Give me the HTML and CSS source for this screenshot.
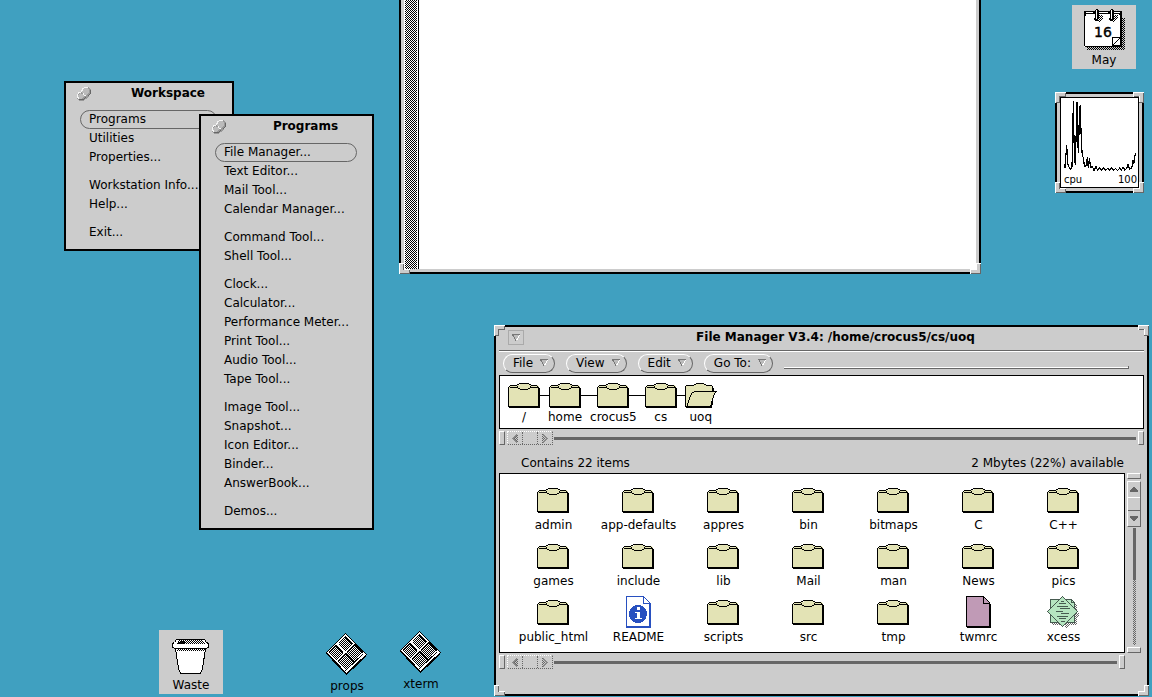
FILE: index.html
```html
<!DOCTYPE html>
<html lang="en">
<head>
<meta charset="utf-8">
<title>OpenWindows desktop</title>
<link rel="stylesheet" href="styles.css">
</head>
<body>
<svg class="defs" aria-hidden="true">
  <defs>
    <pattern id="dither" width="2" height="2" patternUnits="userSpaceOnUse"><path fill="#000" d="M0 0h1v1H0zM1 1h1v1H1z"/></pattern>
    <pattern id="dither-grey" width="2" height="2" patternUnits="userSpaceOnUse"><path fill="#666" d="M0 0h1v1H0zM1 1h1v1H1z"/></pattern>
  </defs>
  <symbol id="folder" viewBox="0 0 32 25">
    <path fill="#e3e3b5" d="M1 4l2-2h8l2-2h7l2 2h7l2 2v20H1z"/>
    <path fill="#000" d="M0 4h1v20H0zM1 23h30v2H1zM30 5h2v20h-2zM29 4h2v1h-2zM1 3h1v1H1zM2 2h7v1H2zM9 1h2v1H9zM11 0h10v1H11zM21 1h2v1h-2zM23 2h6v1h-6zM29 3h1v1h-1zM2 4h7v1H2zM9 3h1v1H9zM10 5h2v1h-2zM12 6h8v1h-8zM20 5h2v1h-2zM22 3h1v1h-1zM23 4h7v1h-7zM9 4h1v1H9zM22 4h1v1h-1z"/>
  </symbol>
  <symbol id="folder-open" viewBox="0 0 32 25">
    <path fill="#e3e3b5" d="M0 4l3-2h6l2-2h7l2 2h6l2 3v3h3l-5 10v5H1z"/>
    <path fill="#000" d="M0 3h1v21H0zM1 2h8v1H1zM9 1h2v1H9zM11 0h8v1h-8zM19 1h2v1h-2zM21 2h6v1h-6zM27 3h1v5h-1zM28 5h1v3h-1zM1 23h26v2H1zM9 8h23v1H9zM7 9h2v1H7zM6 10h1v2H6zM5 12h1v2H5zM4 14h1v3H4zM3 17h1v3H3zM2 20h1v4H2zM30 9h1v1h-1zM29 10h1v2h-1zM28 12h1v3h-1zM27 15h1v3h-1zM26 18h2v4h-2zM25 22h2v2h-2z"/>
  </symbol>
  <symbol id="pin" viewBox="0 0 14 14">
    <path fill="#999" d="M5 2l3-2h4l2 3v3l-2 3-3 3-3 2H2l-2-3V8l2-3h2z"/>
    <path fill="#bbb" d="M6 2l2-1h3l1 2v2l-2 3H7L5 6zM1 8l2-2 2 1 2 2-1 2-3 1-2-1z"/>
    <path fill="none" stroke="#f4f4f4" d="M11 .5H8L5.500 2 4.500 5 2 5.500.5 8v2l1.500 2M6 6l1 2 2 .5"/>
    <path fill="none" stroke="#666" d="M2 12.500h4l3-2M13.500 3v3l-2 3"/>
  </symbol>
  <symbol id="tri" viewBox="0 0 8 7"><path fill="#bbb" d="M0 0h8L4 7z"/><path fill="none" stroke="#777" d="M8 .5H.5L4 6.500"/><path fill="none" stroke="#fff" d="M4.500 6.500L7.500 1"/></symbol>
  <symbol id="corner-tl" viewBox="0 0 11 11"><path fill="#ccc" d="M0 0h11v5H5v6H0z"/><path fill="#666" d="M10 1h1v4H5v6H1v-1h3V4h6z"/><path fill="#fff" d="M0 0h11v1H1v10H0z"/></symbol>
  <symbol id="corner-tr" viewBox="0 0 11 11"><path fill="#ccc" d="M0 0h11v11H6V5H0z"/><path fill="#666" d="M10 1h1v10H6v-1h4zM1 4h5v1H1z"/><path fill="#fff" d="M0 0h11v1H1v4H0zM6 4h1v6H6z"/></symbol>
  <symbol id="corner-bl" viewBox="0 0 11 11"><path fill="#ccc" d="M0 0h5v6h6v5H0z"/><path fill="#666" d="M4 1h1v6H4zM10 7h1v4H1v-1h9z"/><path fill="#fff" d="M0 0h5v1H1v10H0zM5 6h6v1H5z"/></symbol>
  <symbol id="corner-br" viewBox="0 0 11 11"><path fill="#ccc" d="M6 0h5v11H0V6h6z"/><path fill="#666" d="M10 1h1v10H1v-1h9z"/><path fill="#fff" d="M6 0h5v1H7v6H1v4H0V6h6z"/></symbol>
  <symbol id="grid-icon" viewBox="0 0 42 42">
    <path fill="#fff" stroke="#000" d="M19.500.5L.5 19.500l20 21 20-19-2-2z"/>
    <path stroke="#000" fill="none" d="M.5 20.500l20 21 20-19M19.500 37.500l18-17"/>
    <path fill="url(#dither)" d="M19.500 4l7 7-7 7-7-7zM10 13l7 7-7 7-7-7zM28.500 12l8 8-8 8-8-8zM19.500 21l8 8-8 8-8-8z"/>
    <path stroke="#000" fill="none" d="M12.500 10.500l7-7 8 8M3 19.500l7-7 7 7M21 19.500l8-8 8 8M12 28.500l8-8 8 8M19.500 4.500l7 7M10 13.500l7 7M28.500 12.500l8 8"/>
  </symbol>
  <symbol id="arrow-left" viewBox="0 0 6 9"><path fill="url(#dither-grey)" d="M6 0v9L0 5V4z"/><path fill="none" stroke="#888" d="M5 .5l-4 4 4 4"/></symbol>
  <symbol id="arrow-right" viewBox="0 0 6 9"><path fill="url(#dither-grey)" d="M0 0v9l6-4V4z"/><path fill="none" stroke="#888" d="M1 .5l4 4-4 4"/></symbol>
</svg>

<main class="desktop">
  <section class="frame terminal" aria-label="Terminal">
    <div class="terminal-scroll"></div>
    <div class="terminal-text"></div>
    <svg class="corner bl"><use href="#corner-bl"/></svg>
    <svg class="corner br"><use href="#corner-br"/></svg>
  </section>

  <nav class="menu workspace" aria-label="Workspace">
    <header class="menu-head"><svg class="pin"><use href="#pin"/></svg><h2>Workspace</h2></header>
    <div class="group"><button class="item current">Programs</button><button class="item">Utilities</button><button class="item">Properties...</button></div>
    <div class="group"><button class="item">Workstation Info...</button><button class="item">Help...</button></div>
    <div class="group"><button class="item">Exit...</button></div>
  </nav>

  <nav class="menu programs" aria-label="Programs">
    <header class="menu-head"><svg class="pin"><use href="#pin"/></svg><h2>Programs</h2></header>
    <div class="group"><button class="item current">File Manager...</button><button class="item">Text Editor...</button><button class="item">Mail Tool...</button><button class="item">Calendar Manager...</button></div>
    <div class="group"><button class="item">Command Tool...</button><button class="item">Shell Tool...</button></div>
    <div class="group"><button class="item">Clock...</button><button class="item">Calculator...</button><button class="item">Performance Meter...</button><button class="item">Print Tool...</button><button class="item">Audio Tool...</button><button class="item">Tape Tool...</button></div>
    <div class="group"><button class="item">Image Tool...</button><button class="item">Snapshot...</button><button class="item">Icon Editor...</button><button class="item">Binder...</button><button class="item">AnswerBook...</button></div>
    <div class="group"><button class="item">Demos...</button></div>
  </nav>

  <button class="tile calendar">
    <svg width="42" height="42" viewBox="0 0 42 42">
      <path fill="url(#dither)" d="M4 9h38v32H4z"/>
      <path fill="#fff" d="M1 2h38v36H1z"/>
      <path d="M1 2h38v36H2v-1h35V6h-1V5H3v2H2v30H1zM3 3v1h34V3z"/>
      <path fill="#fff" stroke="#000" d="M29.500 36.500v-8h8zM29.500 36.500l8-8v8z"/>
      <path fill="url(#dither)" d="M15 6h5v3l-3 4h-2zM30 6h5v3l-3 4h-2z"/>
      <path d="M10 3h2V1h1V0h2v1h1v9h-1v2h-3v-1h-1V9h2v1h1V3h-2v2h-2zM25 3h2V1h1V0h2v1h1v9h-1v2h-3v-1h-1V9h2v1h1V3h-2v2h-2z"/>
      <path fill="none" stroke="#fff" d="M13.500 1v9M28.500 1v9"/>
      <path d="M12 2h1v7h-1zM27 2h1v7h-1z"/>
      <text class="day" x="20" y="28" text-anchor="middle">16</text>
    </svg>
    <span>May</span>
  </button>

  <section class="frame meter" aria-label="CPU load">
    <div class="meter-face">
      <svg class="graph" width="77" height="74" viewBox="48 294 231 222"><path fill="none" stroke="#000" stroke-width="3.500" d="M58 492L60 504 65 435 69 495 76 508 81 500 85 303 88 470 91 494 96 306 99 440 101 460 103 328 106 316 109 430 112 466 116 475 118 500 124 497 127 470 130 505 133 475 137 503 142 500 147 511 153 500 158 511 164 502 170 511 176 504 182 510 188 505 194 511 200 504 206 510 212 506 218 512 224 504 229 511 234 501 239 510 245 506 249 494 254 508 260 504 264 482 267 490 269 472 272 460"/></svg>
      <div class="meter-labels"><span>cpu</span><span>100</span></div>
    </div>
    <svg class="corner tl"><use href="#corner-tl"/></svg><svg class="corner tr"><use href="#corner-tr"/></svg>
    <svg class="corner bl"><use href="#corner-bl"/></svg><svg class="corner br"><use href="#corner-br"/></svg>
  </section>

  <section class="frame manager" aria-label="File Manager">
    <header class="titlebar">
      <button class="window-menu" aria-label="Window menu"><svg class="tri"><use href="#tri"/></svg></button>
      <h1>File Manager V3.4: /home/crocus5/cs/uoq</h1>
    </header>
    <div class="manager-body">
      <div class="toolbar">
        <button class="pill">File<svg class="tri"><use href="#tri"/></svg></button>
        <button class="pill">View<svg class="tri"><use href="#tri"/></svg></button>
        <button class="pill">Edit<svg class="tri"><use href="#tri"/></svg></button>
        <button class="pill">Go To:<svg class="tri"><use href="#tri"/></svg></button>
        <input class="goto" type="text" aria-label="Go to path">
      </div>
      <ol class="path">
        <li><svg class="folder"><use href="#folder"/></svg><span>/</span></li>
        <li><svg class="folder"><use href="#folder"/></svg><span>home</span></li>
        <li><svg class="folder"><use href="#folder"/></svg><span>crocus5</span></li>
        <li><svg class="folder"><use href="#folder"/></svg><span>cs</span></li>
        <li><svg class="folder"><use href="#folder-open"/></svg><span>uoq</span></li>
      </ol>
      <div class="hscroll"><i class="cap"></i><div class="elevator"><span><svg><use href="#arrow-left"/></svg></span><span></span><span><svg><use href="#arrow-right"/></svg></span></div><i class="rail"></i><i class="cap"></i></div>
      <div class="status"><span>Contains 22 items</span><span>2 Mbytes (22%) available</span></div>
      <div class="browser">
        <ul class="files">
          <li><svg class="folder"><use href="#folder"/></svg><span>admin</span></li>
          <li><svg class="folder"><use href="#folder"/></svg><span>app-defaults</span></li>
          <li><svg class="folder"><use href="#folder"/></svg><span>appres</span></li>
          <li><svg class="folder"><use href="#folder"/></svg><span>bin</span></li>
          <li><svg class="folder"><use href="#folder"/></svg><span>bitmaps</span></li>
          <li><svg class="folder"><use href="#folder"/></svg><span>C</span></li>
          <li><svg class="folder"><use href="#folder"/></svg><span>C++</span></li>
          <li><svg class="folder"><use href="#folder"/></svg><span>games</span></li>
          <li><svg class="folder"><use href="#folder"/></svg><span>include</span></li>
          <li><svg class="folder"><use href="#folder"/></svg><span>lib</span></li>
          <li><svg class="folder"><use href="#folder"/></svg><span>Mail</span></li>
          <li><svg class="folder"><use href="#folder"/></svg><span>man</span></li>
          <li><svg class="folder"><use href="#folder"/></svg><span>News</span></li>
          <li><svg class="folder"><use href="#folder"/></svg><span>pics</span></li>
          <li><svg class="folder"><use href="#folder"/></svg><span>public_html</span></li>
          <li><svg class="doc" viewBox="0 0 25 32"><path fill="#fff" d="M1 1h16l7 7v23H1z"/><path fill="#2850c0" d="M0 0h18v1H1v29h24v2H0zM23 8h2v22h-2zM17 1h1v6h7v1h-8zM18 1h1v1h-1zM19 2h1v1h-1zM20 3h1v1h-1zM21 4h1v1h-1zM22 5h1v1h-1zM23 6h1v1h-1z"/><circle cx="12" cy="18" r="9" fill="#2850c0"/><path fill="#fff" d="M11 11h3v3h-3zM9 16h5v6h2v1H9v-1h2v-5H9z"/></svg><span>README</span></li>
          <li><svg class="folder"><use href="#folder"/></svg><span>scripts</span></li>
          <li><svg class="folder"><use href="#folder"/></svg><span>src</span></li>
          <li><svg class="folder"><use href="#folder"/></svg><span>tmp</span></li>
          <li><svg class="doc" viewBox="0 0 25 32"><path fill="#c09ab6" d="M1 1h16l7 7v23H1z"/><path d="M0 0h18v1H1v29h24v2H1v-1H0zM23 8h2v22h-2zM17 1h1v6h6v1h-7zM18 1h1v1h-1zM19 2h1v1h-1zM20 3h1v1h-1zM21 4h1v1h-1zM22 5h1v1h-1zM23 6h1v2h-1z"/></svg><span>twmrc</span></li>
          <li><svg class="app" viewBox="0 0 32 32"><path fill="url(#dither-grey)" d="M5 8h25v21H5zM18 30l14-14v3L19 32z"/><path fill="#b5e5c0" stroke="#465a50" d="M3.500 3.500h21l3 3v20h-24z"/><path fill="none" stroke="#465a50" d="M24.500 3.500v3h3"/><path fill="#b5e5c0" stroke="#465a50" d="M15.500.5l15 15-15 15-15-15z"/><path stroke="#465a50" d="M14 5.500h3M12 7.500h7M10 10.500h11M13 12.500h10M9 15.500h7M14 17.500h8M10 20.500h11M12 22.500h7M14 25.500h4"/></svg><span>xcess</span></li>
        </ul>
        <div class="vscroll"><i class="cap"></i><div class="elevator"><button aria-label="Scroll up"><svg viewBox="0 0 8 5"><path d="M3 0h2v1h1v1h1v1h1v2H0V3h1V2h1V1h1z"/></svg></button><span></span><button aria-label="Scroll down"><svg viewBox="0 0 8 5"><path d="M0 0h8v2H7v1H6v1H5v1H3V4H2V3H1V2H0z"/></svg></button></div><i class="rail"></i><i class="rail rest"></i><i class="cap"></i></div>
        <div class="hscroll"><i class="cap"></i><div class="elevator"><span><svg><use href="#arrow-left"/></svg></span><span></span><span><svg><use href="#arrow-right"/></svg></span></div><i class="rail"></i><i class="cap"></i></div>
      </div>
    </div>
    <svg class="corner tl"><use href="#corner-tl"/></svg><svg class="corner tr"><use href="#corner-tr"/></svg>
    <svg class="corner bl"><use href="#corner-bl"/></svg><svg class="corner br"><use href="#corner-br"/></svg>
  </section>

  <button class="tile waste">
    <svg width="38" height="36" viewBox="0 0 38 36">
      <path fill="#fff" stroke="#000" d="M3.500 9.500l3 20 2 5h20l2-5 3-20z"/>
      <path fill="url(#dither)" d="M5 10h28v2H5z"/>
      <path fill="#fff" stroke="#000" d="M4.500.5h28l2 3 2 1v4l-3 1h-30l-3-1v-4l2-1z"/>
      <path fill="url(#dither)" d="M7 1h23l3 4H5z"/><path d="M6 3h6v2H5zM8 2h5v2H7z"/>
    </svg>
    <span>Waste</span>
  </button>
  <button class="app-icon props"><svg width="42" height="42"><use href="#grid-icon"/></svg><span>props</span></button>
  <button class="app-icon xterm"><svg width="42" height="42"><use href="#grid-icon"/></svg><span>xterm</span></button>
</main>
</body>
</html>
```
FILE: styles.css
```css
:root {
  --grey: #ccc;
  --shade: #666;
  --sky: #40a0c0;
}
* { box-sizing: border-box; }
body {
  margin: 0;
  background: var(--sky);
  color: #000;
  font: 12px/16px "DejaVu Sans", Verdana, sans-serif;
}
button, input { font: inherit; color: inherit; border: 0; padding: 0; margin: 0; background: none; }
h1, h2 { margin: 0; font-size: 12px; font-weight: bold; }
ol, ul { list-style: none; margin: 0; padding: 0; }
svg { display: block; shape-rendering: crispEdges; }
.defs { position: absolute; width: 0; height: 0; }
.desktop { position: relative; min-height: 100vh; overflow: hidden; }

/* Window frames */
.frame { position: absolute; background: var(--grey); border: 2px solid #000; }
.corner { position: absolute; width: 11px; height: 11px; }
.tl { top: -2px; left: -2px; }
.tr { top: -2px; right: -2px; }
.bl { bottom: -2px; left: -2px; }
.br { bottom: -2px; right: -2px; }

.terminal { left: 399px; top: -40px; width: 582px; height: 314px; display: flex; padding: 0 3px 3px; }
.terminal-scroll {
  width: 14px;
  border: solid #fff;
  border-width: 0 1px;
  background: repeating-conic-gradient(#000 0 25%, #fff 0 50%) 0 0 / 2px 2px;
}
.terminal-text { flex: 1; background: #fff; border-left: 1px solid #000; }

/* Menus */
.menu { position: absolute; background: var(--grey); border: 2px solid #000; padding: 0 15px 7px 14px; }
.workspace { left: 64px; top: 81px; width: 170px; }
.programs { left: 199px; top: 114px; width: 175px; }
.menu-head { display: flex; height: 27px; padding-top: 4px; margin-left: -3px; }
.menu-head h2 { flex: 1; text-align: center; padding-left: 14px; margin-right: -14px; line-height: 12px; }
.pin { width: 14px; height: 14px; }
.group { display: flex; flex-direction: column; }
.group + .group { margin-top: 9px; }
.item { height: 19px; padding: 0 8px 2px; border: 1px solid transparent; border-radius: 10px; text-align: left; white-space: nowrap; line-height: 16px; }
.item.current { border-color: var(--shade); }

/* Desktop icons */
.tile { position: absolute; width: 64px; height: 64px; background: var(--grey); display: flex; flex-direction: column; align-items: center; justify-content: flex-end; line-height: 18px; }
.calendar { right: 16px; top: 5px; }
.day { font: 14px "DejaVu Sans", sans-serif; stroke: #000; stroke-width: 0.4; }
.waste { left: 159px; top: 630px; }
.waste svg { margin-bottom: 1px; }
.app-icon { position: absolute; display: flex; flex-direction: column; align-items: center; gap: 3px; }
.props { left: 326px; top: 633px; }
.xterm { left: 400px; top: 631px; }

.meter { right: 8px; top: 92px; width: 89px; height: 101px; padding: 3px; }
.meter-face { height: 100%; background: #fff; border: 1px solid #000; display: flex; flex-direction: column; }
.meter-labels { display: flex; justify-content: space-between; padding: 0 1px 0 3px; font-size: 10px; line-height: 15px; }

/* File manager */
.manager { left: 494px; right: 3px; top: 325px; }
.titlebar { display: flex; height: 23px; padding: 3px 0 0 12px; }
.titlebar h1 { flex: 1; text-align: center; line-height: 14px; }
.window-menu { width: 16px; height: 15px; display: grid; place-items: center; border: 1px solid; border-color: #fff var(--shade) var(--shade) #fff; outline: 1px solid #aaa; outline-offset: -1px; }
.tri { width: 8px; height: 7px; }
.manager-body { padding: 0 3px 25px; }
.toolbar { display: flex; border-top: 1px solid var(--shade); box-shadow: inset 0 1px #fff; padding: 3px 15px 2px 4px; gap: 11px; }
.pill { display: flex; align-items: center; gap: 7px; height: 19px; padding: 0 6px 2px 9px; border: 1px solid; border-color: #fff var(--shade) var(--shade) #fff; border-radius: 10px; white-space: nowrap; }
.goto { flex: 1; min-width: 0; height: 15px; border-bottom: 1px solid var(--shade); border-right: 1px solid var(--shade); box-shadow: inset 0 -1px #fff; clip-path: inset(12px 0 0 0); }
.path { position: relative; z-index: 0; display: flex; gap: 8px; height: 54px; padding: 7px 8px 0; background: #fff; border: 1px solid #000; }
.path li { position: relative; min-width: 32px; display: flex; flex-direction: column; align-items: center; line-height: 18px; }
.path li + li::before { content: ""; position: absolute; z-index: -1; top: 12px; right: 50%; width: 48px; height: 1px; background: #000; }
.folder { width: 32px; height: 25px; }
.hscroll { display: flex; align-items: center; height: 14px; margin-top: 2px; }
.cap { flex: none; border: 1px solid; border-color: #fff var(--shade) var(--shade) #fff; }
.hscroll .cap { width: 6px; height: 14px; }
.hscroll .elevator { display: flex; width: 46px; height: 14px; margin: 0 1px 0 2px; border: 1px dotted; border-color: #fff var(--shade) var(--shade) #fff; }
.hscroll .elevator span { flex: 1; display: grid; place-items: center; }
.hscroll .elevator span:nth-child(2) { border: dotted; border-width: 0 1px; border-color: #fff var(--shade); }
.hscroll .elevator svg { width: 6px; height: 9px; }
.hscroll .rail { flex: 1; height: 3px; margin-right: 2px; background: var(--shade); }
.status { display: flex; justify-content: space-between; padding: 8px 20px 0 22px; line-height: 20px; }
.browser { display: grid; grid-template-columns: 1fr 19px; }
.files { display: grid; grid-template-columns: repeat(auto-fill, 85px); grid-auto-rows: 56px; height: 180px; padding: 10px 17px 0 11px; overflow: hidden; background: #fff; border: 1px solid #000; }
.files li { display: flex; flex-direction: column; align-items: center; line-height: 18px; white-space: nowrap; }
.files .folder { margin: 4px 1px 3px 0; }
.doc { width: 25px; height: 32px; }
.app { width: 32px; height: 32px; margin-right: 1px; }
.vscroll { display: flex; flex-direction: column; align-items: center; width: 14px; margin-left: 2px; }
.vscroll .cap { width: 14px; height: 6px; }
.vscroll .elevator { width: 14px; height: 46px; margin: 2px 0 1px; display: grid; grid-template-rows: repeat(3, 1fr); border: 1px solid; border-color: #fff var(--shade) var(--shade) #fff; }
.vscroll .elevator button { display: grid; place-items: center; }
.vscroll .elevator span { border: solid; border-width: 1px 0; border-color: #fff transparent var(--shade); }
.vscroll .elevator svg { width: 8px; height: 5px; fill: var(--shade); }
.vscroll .rail { width: 3px; flex: 52; background: var(--shade); }
.vscroll .rail.rest { flex: 65; margin-bottom: 2px; background: repeating-conic-gradient(var(--shade) 0 25%, var(--grey) 0 50%) 0 0 / 2px 2px; }
```
